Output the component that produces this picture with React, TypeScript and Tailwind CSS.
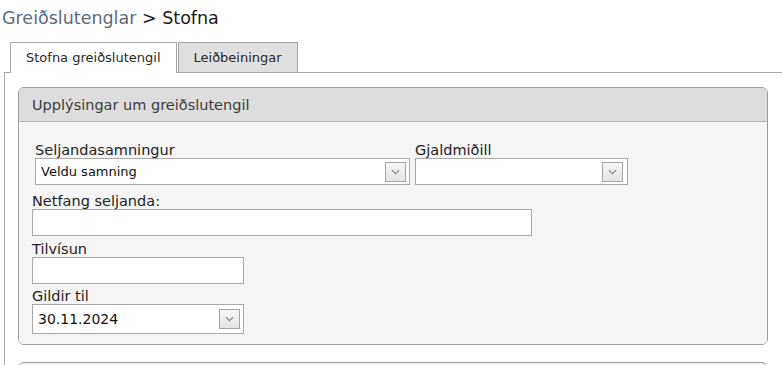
import React from 'react';

const font = { fontFamily: '"DejaVu Sans", Verdana, sans-serif' };

function Chevron() {
  return (
    <svg width="9" height="6" viewBox="0 0 9 6" className="block">
      <path d="M1 1.2 L4.5 4.6 L8 1.2" fill="none" stroke="#8a8a8a" strokeWidth="1.3" />
    </svg>
  );
}

function DropButton({ className = '' }: { className?: string }) {
  return (
    <div
      className={`w-[21px] h-[20px] flex items-center justify-center border border-[#a3a3a3] bg-gradient-to-b from-[#f7f7f7] to-[#e4e4e4] ${className}`}
    >
      <Chevron />
    </div>
  );
}

function SelectBox({ width, value, pr = 'pr-[3px]' }: { width: string; value?: string; pr?: string }) {
  return (
    <div className={`${width} h-[27px] ${pr} flex items-center bg-white border border-[#a9a9a9]`}>
      <span className="flex-1 pl-[5px] text-[13px] text-[#111] leading-none">{value}</span>
      <DropButton />
    </div>
  );
}

function Label({ children, className = '' }: { children: React.ReactNode; className?: string }) {
  return <div className={`text-[14.5px] leading-[16px] text-[#1e1e1e] ${className}`}>{children}</div>;
}

export default function App() {
  return (
    <div className="w-[782px] h-[365px] overflow-hidden bg-white" style={font}>
      <div className="pt-[8px] pl-[2px] text-[17.5px] leading-[21px]">
        <span className="text-[#5b6b7d]">Greiðslutenglar</span>
        <span className="text-[#1a1a1a]"> &gt; Stofna</span>
      </div>

      <div className="pl-[4px] mt-[13px]">
        {/* tabs */}
        <div className="flex items-start gap-[1px] pl-[6px] -mb-px relative z-10">
          <div className="h-[31px] px-[15px] flex items-center bg-white border border-b-0 border-[#a6a6a6] text-[13px] text-[#2a2a2a]">
            Stofna greiðslutengil
          </div>
          <div className="h-[30px] px-[15px] flex items-center bg-[#e0e0e0] border border-b-0 border-[#a6a6a6] text-[13px] text-[#2a2a2a]">
            Leiðbeiningar
          </div>
        </div>

        <div className="border-l border-t border-[#a6a6a6] h-[300px] pt-[14px] pl-[13px] pr-[14px]">
          <div className="rounded-[6px] border border-[#9c9c9c] overflow-hidden">
            <div className="h-[34px] pt-[9px] pl-[13px] bg-[#dddddd] border-b border-[#b5b5b5] text-[14.5px] leading-[17px] text-[#3c3c3c]">
              Upplýsingar um greiðslutengil
            </div>
            <div className="bg-[#f5f5f5] pt-[20px] pl-[13px] pb-[10px]">
              <div className="flex">
                <div className="ml-[3px]">
                  <Label>Seljandasamningur</Label>
                  <SelectBox width="w-[375px]" value="Veldu samning" />
                </div>
                <div className="ml-[5px]">
                  <Label>Gjaldmiðill</Label>
                  <SelectBox width="w-[213px]" pr="pr-[4px]" />
                </div>
              </div>

              <Label className="mt-[8px]">Netfang seljanda:</Label>
              <div className="w-[500px] h-[27px] bg-white border border-[#a9a9a9]" />

              <Label className="mt-[5px]">Tilvísun</Label>
              <div className="w-[212px] h-[27px] bg-white border border-[#a9a9a9]" />

              <Label className="mt-[4px]">Gildir til</Label>
              <div className="w-[212px] h-[30px] pr-[3px] flex items-center bg-white border border-[#a9a9a9]">
                <span className="flex-1 pl-[5px] text-[14px] text-[#111] leading-none">30.11.2024</span>
                <DropButton />
              </div>
            </div>
          </div>

          <div className="mt-[17px] rounded-[6px] border border-[#9c9c9c] h-[40px] bg-[#f5f5f5]" />
        </div>
      </div>
    </div>
  );
}
